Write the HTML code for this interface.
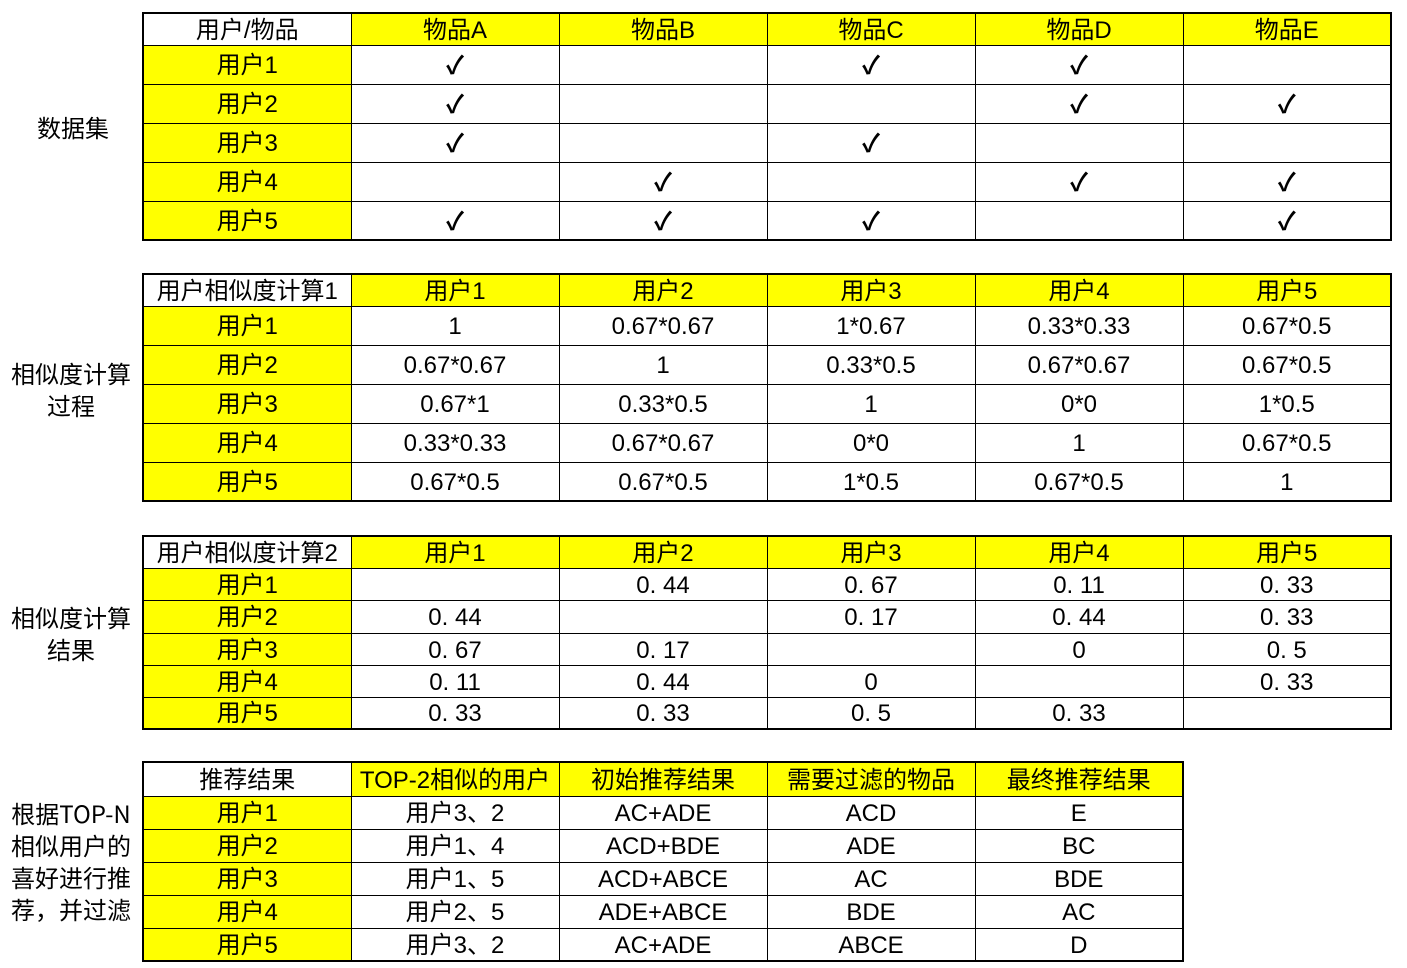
<!DOCTYPE html>
<html><head><meta charset="utf-8"><style>
body{margin:0;background:#fff;width:1407px;height:968px;position:relative;overflow:hidden;font-family:"Liberation Sans","Noto Sans CJK SC",sans-serif;color:#000}
table{position:absolute;left:142px;border-collapse:collapse;border:2px solid #000;table-layout:fixed}
td{border:1px solid #000;padding:3px 0 0 0;text-align:center;font-size:24px;line-height:24px;white-space:nowrap;overflow:hidden;vertical-align:middle}
td.y{background:#ff0}
.lab{position:absolute;font-size:24px;line-height:32px;text-align:center;font-family:"Noto Sans CJK SC",sans-serif}
.ck{font-size:25px;font-weight:bold}
</style></head><body>

<div class="lab" style="left:30px;top:111px;width:86px">数据集</div>
<div class="lab" style="left:3px;top:357px;width:136px">相似度计算<br>过程</div>
<div class="lab" style="left:3px;top:601px;width:136px">相似度计算<br>结果</div>
<div class="lab" style="left:3px;top:797px;width:136px">根据TOP-N<br>相似用户的<br>喜好进行推<br>荐，并过滤</div>

<table style="top:12px;width:1249px">
<colgroup><col width="208"><col width="208"><col width="208"><col width="208"><col width="208"><col width="208"></colgroup>
<tr style="height:32px"><td>用户/物品</td><td class="y">物品A</td><td class="y">物品B</td><td class="y">物品C</td><td class="y">物品D</td><td class="y">物品E</td></tr>
<tr style="height:39px"><td class="y">用户1</td><td class="ck">✓</td><td></td><td class="ck">✓</td><td class="ck">✓</td><td></td></tr>
<tr style="height:39px"><td class="y">用户2</td><td class="ck">✓</td><td></td><td></td><td class="ck">✓</td><td class="ck">✓</td></tr>
<tr style="height:39px"><td class="y">用户3</td><td class="ck">✓</td><td></td><td class="ck">✓</td><td></td><td></td></tr>
<tr style="height:39px"><td class="y">用户4</td><td></td><td class="ck">✓</td><td></td><td class="ck">✓</td><td class="ck">✓</td></tr>
<tr style="height:39px"><td class="y">用户5</td><td class="ck">✓</td><td class="ck">✓</td><td class="ck">✓</td><td></td><td class="ck">✓</td></tr>
</table>

<table style="top:273px;width:1249px">
<colgroup><col width="208"><col width="208"><col width="208"><col width="208"><col width="208"><col width="208"></colgroup>
<tr style="height:32px"><td>用户相似度计算1</td><td class="y">用户1</td><td class="y">用户2</td><td class="y">用户3</td><td class="y">用户4</td><td class="y">用户5</td></tr>
<tr style="height:39px"><td class="y">用户1</td><td>1</td><td>0.67*0.67</td><td>1*0.67</td><td>0.33*0.33</td><td>0.67*0.5</td></tr>
<tr style="height:39px"><td class="y">用户2</td><td>0.67*0.67</td><td>1</td><td>0.33*0.5</td><td>0.67*0.67</td><td>0.67*0.5</td></tr>
<tr style="height:39px"><td class="y">用户3</td><td>0.67*1</td><td>0.33*0.5</td><td>1</td><td>0*0</td><td>1*0.5</td></tr>
<tr style="height:39px"><td class="y">用户4</td><td>0.33*0.33</td><td>0.67*0.67</td><td>0*0</td><td>1</td><td>0.67*0.5</td></tr>
<tr style="height:39px"><td class="y">用户5</td><td>0.67*0.5</td><td>0.67*0.5</td><td>1*0.5</td><td>0.67*0.5</td><td>1</td></tr>
</table>

<table style="top:535px;width:1249px">
<colgroup><col width="208"><col width="208"><col width="208"><col width="208"><col width="208"><col width="208"></colgroup>
<tr style="height:32px"><td>用户相似度计算2</td><td class="y">用户1</td><td class="y">用户2</td><td class="y">用户3</td><td class="y">用户4</td><td class="y">用户5</td></tr>
<tr style="height:32px"><td class="y">用户1</td><td></td><td>0. 44</td><td>0. 67</td><td>0. 11</td><td>0. 33</td></tr>
<tr style="height:33px"><td class="y">用户2</td><td>0. 44</td><td></td><td>0. 17</td><td>0. 44</td><td>0. 33</td></tr>
<tr style="height:32px"><td class="y">用户3</td><td>0. 67</td><td>0. 17</td><td></td><td>0</td><td>0. 5</td></tr>
<tr style="height:32px"><td class="y">用户4</td><td>0. 11</td><td>0. 44</td><td>0</td><td></td><td>0. 33</td></tr>
<tr style="height:32px"><td class="y">用户5</td><td>0. 33</td><td>0. 33</td><td>0. 5</td><td>0. 33</td><td></td></tr>
</table>

<table style="top:761px;width:1041px">
<colgroup><col width="208"><col width="208"><col width="208"><col width="208"><col width="208"></colgroup>
<tr style="height:34px"><td>推荐结果</td><td class="y">TOP-2相似的用户</td><td class="y">初始推荐结果</td><td class="y">需要过滤的物品</td><td class="y">最终推荐结果</td></tr>
<tr style="height:33px"><td class="y">用户1</td><td>用户3、2</td><td>AC+ADE</td><td>ACD</td><td>E</td></tr>
<tr style="height:33px"><td class="y">用户2</td><td>用户1、4</td><td>ACD+BDE</td><td>ADE</td><td>BC</td></tr>
<tr style="height:33px"><td class="y">用户3</td><td>用户1、5</td><td>ACD+ABCE</td><td>AC</td><td>BDE</td></tr>
<tr style="height:33px"><td class="y">用户4</td><td>用户2、5</td><td>ADE+ABCE</td><td>BDE</td><td>AC</td></tr>
<tr style="height:33px"><td class="y">用户5</td><td>用户3、2</td><td>AC+ADE</td><td>ABCE</td><td>D</td></tr>
</table>
</body></html>
